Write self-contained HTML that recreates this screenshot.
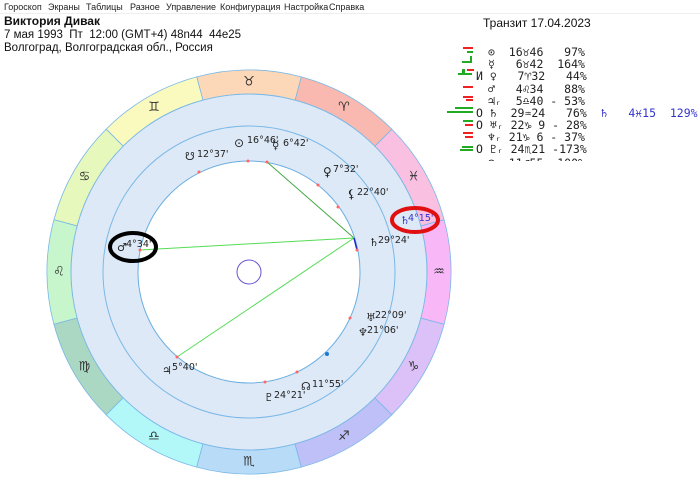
<!DOCTYPE html>
<html><head><meta charset="utf-8"><style>
body{margin:0;width:700px;height:483px;background:#fff;position:relative;overflow:hidden;font-family:"Liberation Sans","DejaVu Sans",sans-serif;}
.menu{position:absolute;top:0;left:0;width:700px;height:13px;font-size:9px;color:#222;border-bottom:1px solid #eee;}
.menu span{position:absolute;top:2px}
.h{position:absolute;left:4px;font-size:11.5px;color:#111;}
.r{position:absolute;font-family:"DejaVu Sans Mono","Liberation Mono",monospace;font-size:11.5px;color:#222;white-space:pre;}
.b{position:absolute;height:2px}
</style></head><body>
<div class="menu"><span style="left:4px">Гороскоп</span><span style="left:48px">Экраны</span><span style="left:86px">Таблицы</span><span style="left:130px">Разное</span><span style="left:166px">Управление</span><span style="left:220px">Конфигурация</span><span style="left:284px">Настройка</span><span style="left:329px">Справка</span></div>
<div class="h" style="top:14px;font-weight:bold;font-size:12px">Виктория Дивак</div>
<div class="h" style="top:29px">7 мая 1993&nbsp; Пт&nbsp; 12:00 (GMT+4) 48n44&nbsp; 44e25</div>
<div class="h" style="top:42px">Волгоград, Волгоградская обл., Россия</div>
<div class="h" style="left:483px;top:16px;font-size:12px">Транзит 17.04.2023</div>

<div class="b" style="left:463px;top:47px;width:10px;background:#e22"></div><div class="b" style="left:467px;top:51px;width:6px;background:#2a2"></div>
<div class="r" style="left:488px;top:45px">⊙  16♉46   97%</div>
<div class="b" style="left:470px;top:56px;width:2px;height:6px;background:#2a2"></div><div class="b" style="left:462px;top:61px;width:10px;background:#2a2"></div>
<div class="r" style="left:488px;top:57px">☿   6♉42  164%</div>
<div class="b" style="left:467px;top:69px;width:7px;background:#e22"></div><div class="b" style="left:458px;top:73px;width:14px;background:#2a2"></div><div class="b" style="left:462px;top:69px;width:3px;height:6px;background:#2a2"></div>
<div class="r" style="left:476px;top:69px">И ♀   7♈32   44%</div>
<div class="b" style="left:463px;top:86px;width:10px;background:#e22"></div>
<div class="r" style="left:488px;top:82px">♂   4♌34   88%</div>
<div class="b" style="left:463px;top:96px;width:10px;background:#e22"></div><div class="b" style="left:466px;top:99px;width:7px;background:#e22"></div>
<div class="r" style="left:488px;top:94px">♃ᵣ  5♎40 - 53%</div>
<div class="b" style="left:455px;top:107px;width:18px;background:#2a2"></div><div class="b" style="left:447px;top:111px;width:26px;background:#2a2"></div>
<div class="r" style="left:476px;top:106px">O ♄  29♒24   76%  <span style="color:#33c">♄   4♓15  129%</span></div>
<div class="b" style="left:463px;top:120px;width:10px;background:#2a2"></div><div class="b" style="left:465px;top:124px;width:8px;background:#e22"></div>
<div class="r" style="left:476px;top:118px">O ♅ᵣ 22♑ 9 - 28%</div>
<div class="b" style="left:463px;top:132px;width:10px;background:#e22"></div><div class="b" style="left:465px;top:136px;width:8px;background:#e22"></div>
<div class="r" style="left:488px;top:130px">♆ᵣ 21♑ 6 - 37%</div>
<div class="b" style="left:462px;top:146px;width:11px;background:#2a2"></div><div class="b" style="left:460px;top:149px;width:13px;background:#2a2"></div>
<div class="r" style="left:476px;top:142px">O ♇ᵣ 24♏21 -173%</div>
<div class="r" style="left:488px;top:156px;height:5px;overflow:hidden">☊  11♐55  100%</div>

<svg width="700" height="483" style="position:absolute;left:0;top:0" font-family="DejaVu Sans,sans-serif">
<defs><path id="s" d="M202 0 A202 202 0 0 0 174.9 -101 L154.2 -89 A178 178 0 0 1 178 0 Z" stroke="#7ab8e6" stroke-width="0.8"/></defs>
<g transform="translate(249,272)">
<circle r="178" fill="#dde9f7" stroke="#7ab8e6"/>
<use href="#s" transform="rotate(-15)" fill="#f9c0e2"/>
<use href="#s" transform="rotate(-45)" fill="#f9b9b0"/>
<use href="#s" transform="rotate(-75)" fill="#fcd8b8"/>
<use href="#s" transform="rotate(-105)" fill="#fafabe"/>
<use href="#s" transform="rotate(-135)" fill="#e6f8bc"/>
<use href="#s" transform="rotate(-165)" fill="#c8f6cc"/>
<use href="#s" transform="rotate(-195)" fill="#aad8c2"/>
<use href="#s" transform="rotate(-225)" fill="#b2f8f8"/>
<use href="#s" transform="rotate(-255)" fill="#b8dcf8"/>
<use href="#s" transform="rotate(-285)" fill="#c0c0f8"/>
<use href="#s" transform="rotate(-315)" fill="#dcc0f8"/>
<use href="#s" transform="rotate(-345)" fill="#f8b8f8"/>
<circle r="146" fill="none" stroke="#7ab8e6"/>
<circle r="111" fill="#fff" stroke="#6aaee0"/>
<circle r="12" fill="none" stroke="#6655cc"/>
<g font-size="13" text-anchor="middle" dominant-baseline="central" fill="#333">
<text x="95" y="-164.5">♈</text><text x="0" y="-190">♉</text><text x="-95" y="-164.5">♊</text><text x="-164.5" y="-95">♋</text><text x="-190" y="0">♌</text><text x="-164.5" y="95">♍</text><text x="-95" y="164.5">♎</text><text x="0" y="190">♏</text><text x="95" y="164.5">♐</text><text x="164.5" y="95">♑</text><text x="190" y="0">♒</text><text x="164.5" y="-95">♓</text>
</g>
</g>
<g stroke="#55dd55" stroke-width="1"><line x1="354" y1="238" x2="267" y2="162" stroke="#44aa44"/><line x1="354" y1="238" x2="140" y2="250"/><line x1="354" y1="238" x2="177" y2="357"/></g>
<line x1="354" y1="238" x2="357" y2="250" stroke="#22c" stroke-width="1.5"/>
<g fill="#f66"><circle cx="248" cy="161" r="1.5"/><circle cx="267" cy="162" r="1.5"/><circle cx="199" cy="172" r="1.5"/><circle cx="318" cy="185" r="1.5"/><circle cx="338" cy="207" r="1.5"/><circle cx="357" cy="250" r="1.5"/><circle cx="140" cy="250" r="1.5"/><circle cx="350" cy="318" r="1.5"/><circle cx="177" cy="357" r="1.5"/><circle cx="297" cy="372" r="1.5"/><circle cx="265" cy="382" r="1.5"/></g>
<circle cx="327" cy="354" r="2" fill="#1a7ad0"/>
<g font-size="9.5" fill="#222">
<text x="234" y="147" font-size="12">⊙</text><text x="247" y="143">16°46'</text>
<text x="272" y="149" font-size="12">☿</text><text x="283" y="146">6°42'</text>
<text x="185" y="160" font-size="11">☋</text><text x="197" y="157">12°37'</text>
<text x="323" y="176" font-size="12">♀</text><text x="333" y="172">7°32'</text>
<text x="347" y="198" font-size="12" font-weight="bold">⚸</text><text x="357" y="195">22°40'</text>
<text x="369" y="246" font-size="11">♄</text><text x="378" y="243">29°24'</text>
<text x="117" y="251" font-size="11">♂</text><text x="126" y="247">4°34'</text>
<text x="366" y="321" font-size="11">♅</text><text x="375" y="318">22°09'</text>
<text x="358" y="336" font-size="11">♆</text><text x="367" y="333">21°06'</text>
<text x="162" y="374" font-size="11">♃</text><text x="172" y="370">5°40'</text>
<text x="264" y="401" font-size="11">♇</text><text x="274" y="398">24°21'</text>
<text x="301" y="390" font-size="11">☊</text><text x="312" y="387">11°55'</text>
<text x="400" y="224" font-size="11" fill="#33c">♄</text><text x="408" y="221" fill="#33c">4°15'</text>
</g>
<ellipse cx="415" cy="220" rx="23" ry="12" fill="none" stroke="#e01010" stroke-width="4"/>
<ellipse cx="133" cy="247" rx="23" ry="14" fill="none" stroke="#000" stroke-width="4"/>
</svg>
</body></html>
